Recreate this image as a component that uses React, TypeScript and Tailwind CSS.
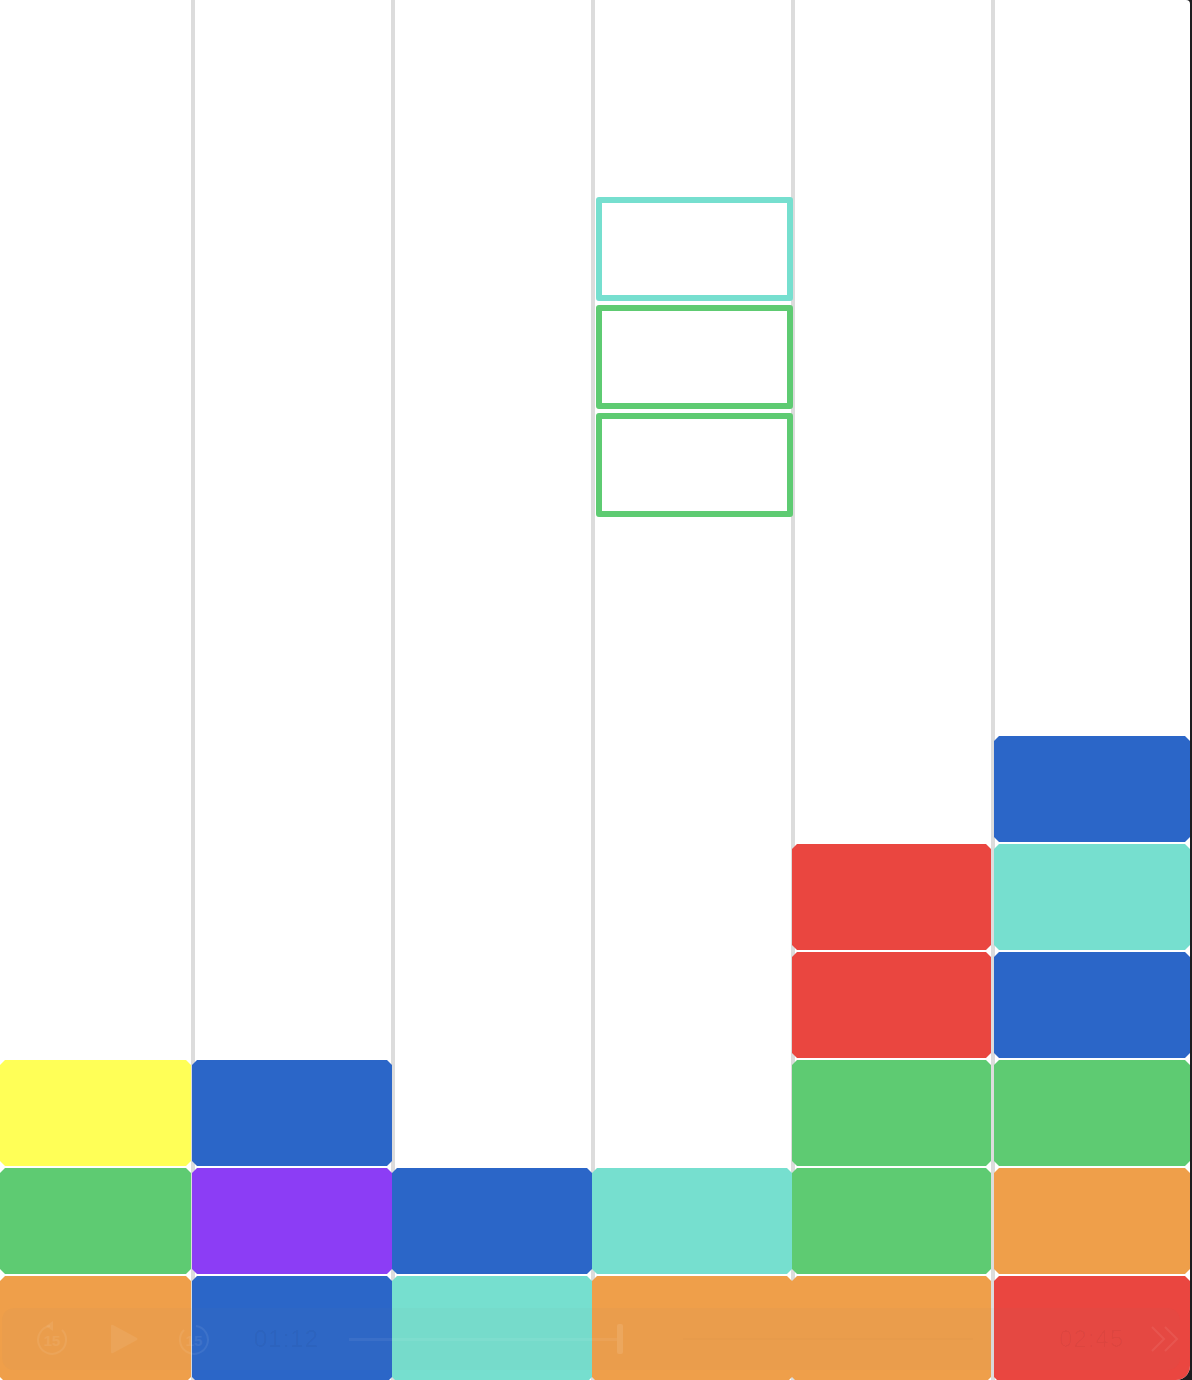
const chamfer = "[clip-path:polygon(5px_0,calc(100%-5px)_0,100%_5px,100%_calc(100%-5px),calc(100%-5px)_100%,5px_100%,0_calc(100%-5px),0_5px)]";

const O = "bg-[#ef9f4a]", B = "bg-[#2b66c8]", T = "bg-[#76dfcf]", G = "bg-[#5ecb72]", R = "bg-[#ea4640]", Y = "bg-[#ffff57]", P = "bg-[#8c3df5]";

function Cell({ color, cls }: { color: string; cls: string }) {
  return <div className={`h-[106px] shrink-0 mt-[2px] ${chamfer} ${color} ${cls}`} />;
}

function Ghost({ color }: { color: string }) {
  return <div className={`h-[104px] mb-[4px] ml-[1px] -mr-[2px] border-[6px] rounded-[3px] ${color}`} />;
}

function Replay({ forward }: { forward?: boolean }) {
  return (
    <div className="relative w-[32px] h-[36px] flex items-end justify-center shrink-0">
      <svg width="32" height="36" viewBox="0 0 32 36" fill="none" className="absolute inset-0">
        <path d={forward ? "M18 5 A14 14 0 1 1 6 9" : "M14 5 A14 14 0 1 0 26 9"} stroke="currentColor" strokeWidth="2" />
        {!forward && <path d="M17 0 L10 5 L17 10 Z" fill="currentColor" />}
      </svg>
      <span className="relative mb-[6px] text-[15px] leading-[20px] font-['Liberation_Sans',sans-serif] font-bold">15</span>
    </div>
  );
}

export default function App() {
  const cols: { cls: string; line: boolean; cells: string[]; ghosts?: string[] }[] = [
    { cls: "w-[195px]", line: true, cells: [Y, G, O] },
    { cls: "w-[200px]", line: true, cells: [B, P, B] },
    { cls: "w-[200px]", line: true, cells: [B, T] },
    { cls: "w-[200px]", line: true, cells: [T, O] },
    { cls: "w-[200px]", line: true, cells: [R, R, G, G, O] },
    { cls: "w-[195px]", line: false, cells: [B, T, B, G, O, R] },
  ];
  return (
    <div className="relative w-[1192px] h-[1380px] overflow-hidden bg-[#1d1d1f]">
      <div className="flex w-[1190px] h-[1380px] bg-white rounded-tr-[4px] rounded-br-[14px] overflow-hidden">
        {cols.map((c, i) => (
          <div
            key={i}
            className={`${c.cls} h-[1380px] flex flex-col shrink-0 ${c.line ? "border-r-4 border-[#dcdcdc]" : ""}`}
          >
            {i === 3 && (
              <div className="pt-[197px] flex flex-col">
                <Ghost color="border-[#76dfcf]" />
                <Ghost color="border-[#5ecb72]" />
                <Ghost color="border-[#5ecb72]" />
              </div>
            )}
            <div className="mt-auto -mb-[2px] flex flex-col">
              {c.cells.map((color, j) => (
                <Cell
                  key={j}
                  color={color}
                  cls={i === 0 ? "" : i === 5 ? "-ml-[1px]" : i === 4 ? "-ml-[3px] -mr-[0px]" : "-ml-[3px] -mr-[1px]"}
                />
              ))}
            </div>
          </div>
        ))}
      </div>

      {/* faint floating player */}
      <div className="absolute left-[2px] top-[1308px] w-[1178px] h-[62px] rounded-[12px] bg-[#808080]/[0.04] flex items-center text-white/[0.07] font-['Liberation_Sans',sans-serif]">
        <div className="ml-[34px]"><Replay /></div>
        <svg width="28" height="30" viewBox="0 0 28 30" className="ml-[42px] shrink-0" fill="currentColor">
          <path d="M1 2 Q1 0 3 1 L27 14 Q28 15 27 16 L3 29 Q1 30 1 28 Z" />
        </svg>
        <div className="ml-[40px]"><Replay forward /></div>
        <span className="ml-[44px] text-[24px] leading-[30px] text-black/[0.05] tracking-[1px]">01:12</span>
        <div className="ml-[30px] w-[278px] h-[3px] bg-white/[0.06]" />
        <div className="w-[6px] h-[30px] rounded-[2px] bg-white/[0.1]" />
        <div className="w-[300px] h-[2px] ml-[60px] bg-black/[0.01]" />
        <span className="ml-[86px] text-[24px] leading-[30px] text-black/[0.03] tracking-[1px]">02:45</span>
        <svg width="30" height="26" viewBox="0 0 30 26" fill="none" stroke="currentColor" strokeWidth="2" className="ml-[26px] shrink-0">
          <path d="M2 1 L14 13 L2 25 M15 1 L27 13 L15 25" />
        </svg>
      </div>
    </div>
  );
}
